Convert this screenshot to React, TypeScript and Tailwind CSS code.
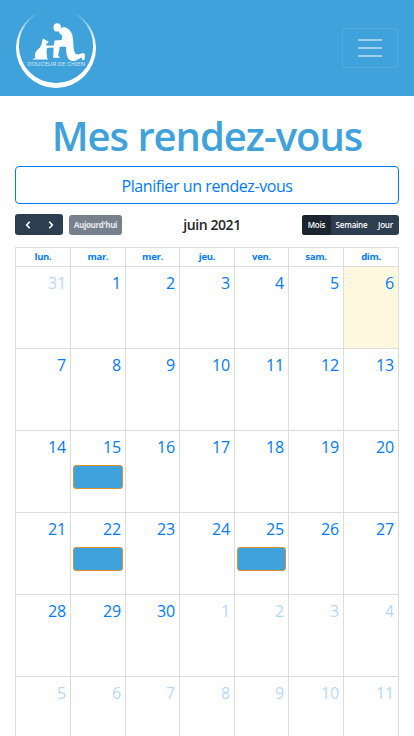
import React from "react";

type Day = { n: number; other?: boolean; today?: boolean; event?: boolean };

const HEADS = ["lun.", "mar.", "mer.", "jeu.", "ven.", "sam.", "dim."];
const EVENTS = [15, 22, 25];

const DAYS: Day[] = Array.from({ length: 42 }, (_, i) => {
  if (i === 0) return { n: 31, other: true };
  if (i <= 30) return { n: i, today: i === 6, event: EVENTS.includes(i) };
  return { n: i - 30, other: true };
});

const COLS = "grid grid-cols-[55px_55px_54px_55px_54px_55px_56px]";

function Logo() {
  return (
    <svg width="80" height="80" viewBox="0 0 80 80" className="block" fill="#fff">
      <defs>
        <linearGradient id="fade" x1="0" y1="0" x2="0" y2="80" gradientUnits="userSpaceOnUse">
          <stop offset="0.05" stopColor="#fff" stopOpacity="0" />
          <stop offset="0.25" stopColor="#fff" stopOpacity="0.6" />
          <stop offset="0.45" stopColor="#fff" />
        </linearGradient>
      </defs>
      <path
        fill="url(#fade)"
        fillRule="evenodd"
        d="M40 0a40 40 0 1 1 0 80a40 40 0 1 1 0-80ZM40 .9a37.1 37.1 0 1 0 0 74.2a37.1 37.1 0 1 0 0-74.2Z"
      />
      <ellipse cx="41.2" cy="19.4" rx="3.7" ry="4.2" />
      <path d="M43 22.6L46 19.4C50 18.6 54 21 56 26.2C57.6 30.5 57.2 36 57.6 39.5C58 44 59.5 46.5 61.5 46.5L67.5 45L69 46.2L68.6 51.5L66.3 52.5L65.6 49.5L59 52.9C54 53.8 51 50.5 50.4 45L50 38.8H43.8L42.2 47.8L44.2 49.8H37.2L37.6 39.8L31 39.4L30.8 37.8L37.8 37.4L38.6 32.6L45.6 32L46.2 27.4L43.4 25.2Z" />
      <path d="M26.5 31.4L28 30.6L29.2 32L32.6 33.4L32 35L30.2 35.8L30.4 37.6L33.5 38.2L33 39.6L30.8 40.2L30.6 44.5L31.2 50.2L32.2 51.6H16.3L17.8 50.4L19.6 50C18 46.4 19.6 42.4 24 39.4L25.6 36Z" />
      <text
        x="11.5"
        y="58.3"
        textLength="57.5"
        lengthAdjust="spacingAndGlyphs"
        opacity=".75"
        className="font-['Inter',sans-serif] text-[5.2px]"
      >
        DOUCEUR DE CHIEN
      </text>
    </svg>
  );
}

function Chevron({ d }: { d: string }) {
  return (
    <svg width="6" height="8" viewBox="0 0 6 8" fill="none" stroke="#fff" strokeWidth="1.6">
      <path d={d} />
    </svg>
  );
}

export default function App() {
  return (
    <div className="h-[736px] w-[414px] overflow-hidden bg-white font-['Open_Sans','Noto_Sans',sans-serif] text-[#212529]">
      <header className="flex h-24 items-center justify-between bg-[#3fa2da] px-4">
        <Logo />
        <button className="flex h-10 w-14 flex-col items-center justify-center gap-[6px] rounded border border-white/10">
          <span className="h-[2px] w-6 bg-white/50" />
          <span className="h-[2px] w-6 bg-white/50" />
          <span className="h-[2px] w-6 bg-white/50" />
        </button>
      </header>

      <main className="px-[15px]">
        <h1 className="flex h-[70px] items-center justify-center pt-[9px] text-[40px] leading-[48px] font-semibold tracking-[-1.05px] whitespace-nowrap text-[#3fa2da]">
          Mes rendez-vous
        </h1>
        <button className="flex h-[38px] w-full items-center justify-center rounded border border-[#007bff] pt-px text-[16px] tracking-[-0.42px] text-[#007bff]">
          Planifier un rendez-vous
        </button>

        <div className="mt-[10px] flex h-[21px] items-center justify-between">
          <div className="flex w-[107px] items-center gap-[6px]">
            <div className="flex h-[21px] w-12 items-center justify-around rounded-[3px] bg-[#2c3e50] px-px">
              <Chevron d="M4.7 .8L1.7 4L4.7 7.2" />
              <Chevron d="M1.3 .8L4.3 4L1.3 7.2" />
            </div>
            <div className="mt-px flex h-5 w-[53px] items-center justify-center rounded-[3px] bg-[#76818d] text-[8px] font-bold tracking-[-0.35px] text-[#e8eaec]">
              Aujourd'hui
            </div>
          </div>
          <h2 className="text-[14px] font-semibold tracking-[-0.4px] whitespace-nowrap">juin 2021</h2>
          <div className="mt-px flex h-5 w-[97px] overflow-hidden rounded-[3px] bg-[#2c3e50] text-[8px] font-semibold tracking-[-0.2px] text-white">
            <span className="flex w-[29px] items-center justify-center bg-[#1a252f]">Mois</span>
            <span className="flex w-[41px] items-center justify-center">Semaine</span>
            <span className="flex w-[27px] items-center justify-center">Jour</span>
          </div>
        </div>

        <div className="mt-3">
          <div className={COLS}>
            {HEADS.map((h) => (
              <div
                key={h}
                className="flex h-[19px] items-center justify-center border-t border-l border-[#ddd] pt-px text-[9.5px] font-bold tracking-[-0.3px] text-[#007bff] last:border-r"
              >
                {h}
              </div>
            ))}
          </div>
          <div className={COLS}>
            {DAYS.map((d, i) => (
              <div
                key={i}
                className={
                  "h-[82px] border-t border-l border-[#ddd] pt-1 nth-[7n]:border-r " +
                  (d.today ? "bg-[#fff8df]" : "")
                }
              >
                <div
                  className={
                    "pr-1 text-right text-[16px] leading-6 tracking-[-0.2px] text-[#007bff] " + (d.other ? "opacity-30" : "")
                  }
                >
                  {d.n}
                </div>
                {d.event && (
                  <div className="mt-[6px] mr-[2px] ml-[2px] h-6 rounded-[3px] border border-[#dd8f2c] bg-[#3fa2da]" />
                )}
              </div>
            ))}
          </div>
        </div>
      </main>
    </div>
  );
}
